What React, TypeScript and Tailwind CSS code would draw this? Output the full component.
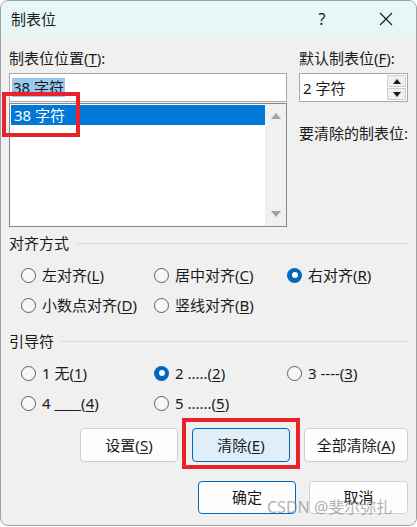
import React from "react";

const font = { fontFamily: '"Noto Sans", "Noto Sans CJK SC", sans-serif' };

function U({ children }: { children: React.ReactNode }) {
  return <span className="underline underline-offset-[2px] decoration-1">{children}</span>;
}

function Radio({ checked, children }: { checked?: boolean; children: React.ReactNode }) {
  return (
    <div className="flex items-center h-[30px]">
      {checked ? (
        <span className="w-[15px] h-[15px] rounded-full bg-[#0067c0] flex items-center justify-center shrink-0">
          <span className="w-[6px] h-[6px] rounded-full bg-white" />
        </span>
      ) : (
        <span className="w-[15px] h-[15px] rounded-full border border-[#5f5f5f] bg-[#f7f7f7] shrink-0" />
      )}
      <span className="ml-[6px] text-[15px] leading-[20px] text-[#1a1a1a] whitespace-pre">{children}</span>
    </div>
  );
}

function GroupTitle({ label }: { label: string }) {
  return (
    <div className="flex items-center h-[20px]">
      <span className="text-[15px] leading-[20px] text-[#1a1a1a]">{label}</span>
      <span className="flex-1 ml-[7px] h-px bg-[#dadada]" />
    </div>
  );
}

function Btn({ children, w, variant }: { children: React.ReactNode; w: string; variant?: "focus" | "default" }) {
  const cls =
    variant === "focus"
      ? "bg-[#e0eef9] border-[#0067c0]"
      : variant === "default"
      ? "bg-[#fdfdfd] border-[#0067c0]"
      : "bg-[#fdfdfd] border-[#d0d0d0]";
  return (
    <div className={`${w} h-full rounded-[4px] border ${cls} flex items-center justify-center text-[15px] text-[#1a1a1a]`}>
      {children}
    </div>
  );
}

export default function App() {
  return (
    <div className="relative w-[417px] h-[527px] bg-white" style={font}>
      <div className="w-[417px] h-[526px] border border-[#a0a0a0] rounded-[8px] overflow-hidden flex flex-col bg-[#f0f0f0]">
        {/* title bar */}
        <div className="h-[35px] bg-[#e7f6f6] flex items-center pl-[10px] shrink-0">
          <span className="text-[15px] text-[#1a1a1a] leading-[20px]">制表位</span>
          <span className="ml-auto text-[16px] text-[#1a1a1a] w-[14px] text-center mr-[50px]">?</span>
          <svg width="14" height="14" viewBox="0 0 14 14" className="mr-[23px]">
            <path d="M1 1 L13 13 M13 1 L1 13" stroke="#1a1a1a" strokeWidth="1.1" />
          </svg>
        </div>

        <div className="flex-1 px-[8px] pt-[12px]">
          <div className="flex gap-[12px]">
            <div className="w-[278px]">
              <div className="text-[15px] leading-[20px] text-[#1a1a1a]">
                制表位位置(<U>T</U>):
              </div>
              <div className="mt-[5px] h-[29px] bg-white border border-[#a8a8a8] flex items-center pl-[2px]">
                <span className="bg-[#99c9ef] text-[15px] leading-[19px] text-[#1a1a1a] px-[1px]">38 字符</span>
              </div>
              <div className="mt-[1px] h-[124px] bg-white border border-[#828790] flex p-[1px] pr-0">
                <div className="flex-1">
                  <div className="h-[20px] bg-[#0078d7] text-white text-[15px] leading-[20px] pl-[3px]">38 字符</div>
                </div>
                <div className="w-[21px] bg-[#f0f0f0] flex flex-col items-center justify-between py-[9px] -my-[1px]">
                  <svg width="10" height="6" viewBox="0 0 10 6">
                    <path d="M0 6 L5 0 L10 6 Z" fill="#a3a3a3" />
                  </svg>
                  <svg width="10" height="6" viewBox="0 0 10 6">
                    <path d="M0 0 L5 6 L10 0 Z" fill="#a3a3a3" />
                  </svg>
                </div>
              </div>
            </div>

            <div className="w-[109px]">
              <div className="text-[15px] leading-[20px] text-[#1a1a1a] whitespace-nowrap">
                默认制表位(<U>F</U>):
              </div>
              <div className="mt-[5px] h-[29px] bg-white border border-[#a8a8a8] flex items-center">
                <span className="flex-1 text-[15px] leading-[20px] text-[#1a1a1a] pl-[3px]">2 字符</span>
                <div className="w-[19px] mr-[1px] flex flex-col gap-[1px]">
                  <div className="h-[12px] bg-[#f0f0f0] border border-[#cfcfcf] flex items-center justify-center">
                    <svg width="8" height="5" viewBox="0 0 8 5">
                      <path d="M0 5 L4 0 L8 5 Z" fill="#1a1a1a" />
                    </svg>
                  </div>
                  <div className="h-[12px] bg-[#f0f0f0] border border-[#cfcfcf] flex items-center justify-center">
                    <svg width="8" height="5" viewBox="0 0 8 5">
                      <path d="M0 0 L4 5 L8 0 Z" fill="#1a1a1a" />
                    </svg>
                  </div>
                </div>
              </div>
              <div className="mt-[21px] text-[15px] leading-[20px] text-[#1a1a1a] whitespace-nowrap">要清除的制表位:</div>
            </div>
          </div>

          <div className="mt-[6px]">
            <GroupTitle label="对齐方式" />
          </div>
          <div className="mt-[7px] pl-[12px] grid grid-cols-[133px_133px_1fr]">
            <Radio>左对齐(<U>L</U>)</Radio>
            <Radio>居中对齐(<U>C</U>)</Radio>
            <Radio checked>右对齐(<U>R</U>)</Radio>
            <Radio>小数点对齐(<U>D</U>)</Radio>
            <Radio>竖线对齐(<U>B</U>)</Radio>
          </div>

          <div className="mt-[11px]">
            <GroupTitle label="引导符" />
          </div>
          <div className="mt-[7px] pl-[12px] grid grid-cols-[133px_133px_1fr]">
            <Radio>1 无(<U>1</U>)</Radio>
            <Radio checked>2 .....(<U>2</U>)</Radio>
            <Radio>3 ----(<U>3</U>)</Radio>
            <Radio>4 ____(<U>4</U>)</Radio>
            <Radio>5 ......(<U>5</U>)</Radio>
          </div>

          <div className="mt-[10px] h-[34px] flex justify-end gap-[14px]">
            <Btn w="w-[98px]">设置(<U>S</U>)</Btn>
            <Btn w="w-[98px]" variant="focus">清除(<U>E</U>)</Btn>
            <Btn w="w-[104px]">全部清除(<U>A</U>)</Btn>
          </div>
          <div className="mt-[19px] h-[33px] flex justify-end gap-[13px]">
            <Btn w="w-[98px]" variant="default">确定</Btn>
            <Btn w="w-[99px]">取消</Btn>
          </div>
        </div>
      </div>

      {/* annotation overlays */}
      <div className="absolute left-[2px] top-[92px] w-[78px] h-[45px] border-[4px] border-[#e8222a]" />
      <div className="absolute left-[182px] top-[418px] w-[118px] h-[51px] border-[4px] border-[#e8222a]" />
      <div className="absolute left-[267px] top-[496px] text-[16px] leading-[22px] text-[#8f8f8f]/70 whitespace-nowrap">
        CSDN @斐尔弥扎
      </div>
    </div>
  );
}
